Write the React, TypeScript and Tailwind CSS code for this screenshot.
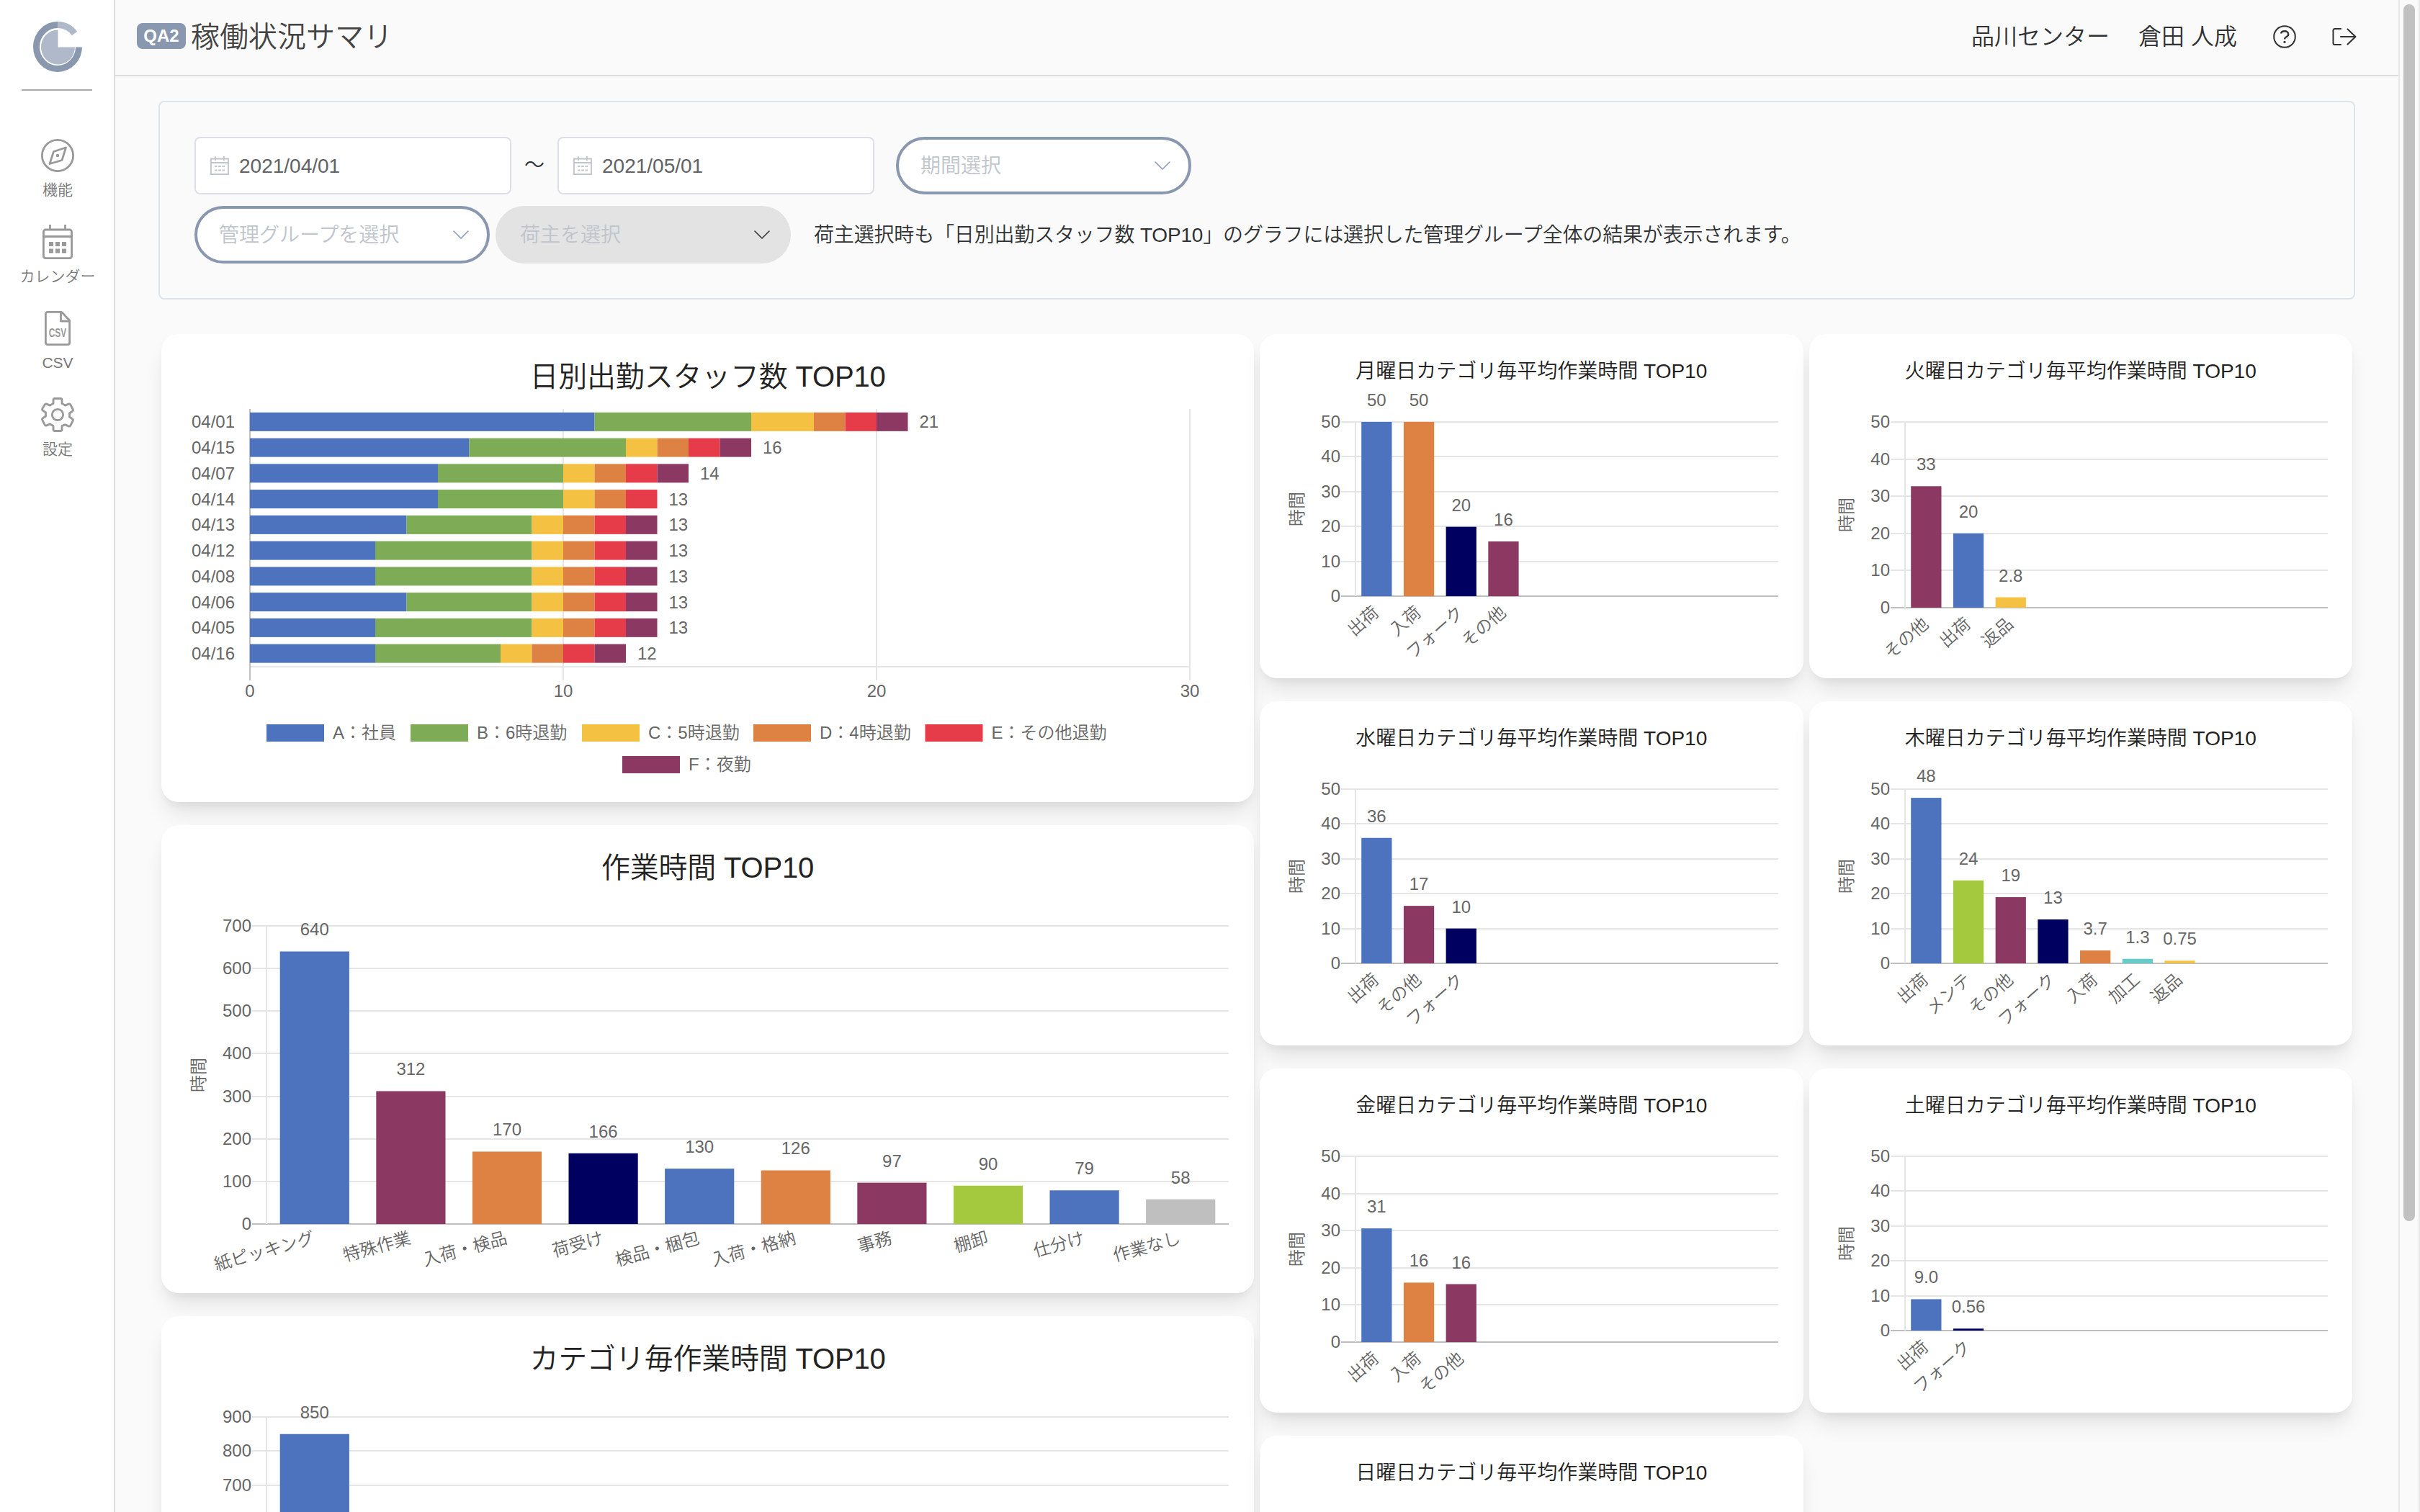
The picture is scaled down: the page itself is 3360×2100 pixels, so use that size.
import React from 'react';
import clsx from 'clsx';

const BLUE = '#4d72be';
const GREEN = '#7eab55';
const YELLOW = '#f4c142';
const ORANGE = '#dd8243';
const RED = '#e63b49';
const PURPLE = '#8b3962';
const NAVY = '#000060';
const LIME = '#a4c93f';
const TEAL = '#67cbc9';
const GRAY = '#bfbfbf';

type Bar = { name: string; value: number; label: string; color: string };

const staff = [
  { day: '04/01', values: [11, 5, 2, 1, 1, 1] },
  { day: '04/15', values: [7, 5, 1, 1, 1, 1] },
  { day: '04/07', values: [6, 4, 1, 1, 1, 1] },
  { day: '04/14', values: [6, 4, 1, 1, 1, 0] },
  { day: '04/13', values: [5, 4, 1, 1, 1, 1] },
  { day: '04/12', values: [4, 5, 1, 1, 1, 1] },
  { day: '04/08', values: [4, 5, 1, 1, 1, 1] },
  { day: '04/06', values: [5, 4, 1, 1, 1, 1] },
  { day: '04/05', values: [4, 5, 1, 1, 1, 1] },
  { day: '04/16', values: [4, 4, 1, 1, 1, 1] },
];

const legend = [
  { name: 'A：社員', color: BLUE, x: 146, y: 542 },
  { name: 'B：6時退勤', color: GREEN, x: 346, y: 542 },
  { name: 'C：5時退勤', color: YELLOW, x: 584, y: 542 },
  { name: 'D：4時退勤', color: ORANGE, x: 822, y: 542 },
  { name: 'E：その他退勤', color: RED, x: 1060.5, y: 542 },
  { name: 'F：夜勤', color: PURPLE, x: 640, y: 586 },
];

const work: Bar[] = [
  { name: '紙ピッキング', value: 640, label: '640', color: BLUE },
  { name: '特殊作業', value: 312, label: '312', color: PURPLE },
  { name: '入荷・検品', value: 170, label: '170', color: ORANGE },
  { name: '荷受け', value: 166, label: '166', color: NAVY },
  { name: '検品・梱包', value: 130, label: '130', color: BLUE },
  { name: '入荷・格納', value: 126, label: '126', color: ORANGE },
  { name: '事務', value: 97, label: '97', color: PURPLE },
  { name: '棚卸', value: 90, label: '90', color: LIME },
  { name: '仕分け', value: 79, label: '79', color: BLUE },
  { name: '作業なし', value: 58, label: '58', color: GRAY },
];

const category: Bar[] = [{ name: '出荷', value: 850, label: '850', color: BLUE }];

const weekdays: { day: string; zero: number; bars: Bar[] }[] = [
  {
    day: '月', zero: 364, bars: [
      { name: '出荷', value: 50, label: '50', color: BLUE },
      { name: '入荷', value: 50, label: '50', color: ORANGE },
      { name: 'フォーク', value: 19.9, label: '20', color: NAVY },
      { name: 'その他', value: 15.7, label: '16', color: PURPLE },
    ],
  },
  {
    day: '火', zero: 380, bars: [
      { name: 'その他', value: 32.7, label: '33', color: PURPLE },
      { name: '出荷', value: 20, label: '20', color: BLUE },
      { name: '返品', value: 2.8, label: '2.8', color: YELLOW },
    ],
  },
  {
    day: '水', zero: 364, bars: [
      { name: '出荷', value: 36, label: '36', color: BLUE },
      { name: 'その他', value: 16.5, label: '17', color: PURPLE },
      { name: 'フォーク', value: 10, label: '10', color: NAVY },
    ],
  },
  {
    day: '木', zero: 364, bars: [
      { name: '出荷', value: 47.5, label: '48', color: BLUE },
      { name: 'メンテ', value: 23.8, label: '24', color: LIME },
      { name: 'その他', value: 19, label: '19', color: PURPLE },
      { name: 'フォーク', value: 12.6, label: '13', color: NAVY },
      { name: '入荷', value: 3.7, label: '3.7', color: ORANGE },
      { name: '加工', value: 1.3, label: '1.3', color: TEAL },
      { name: '返品', value: 0.75, label: '0.75', color: YELLOW },
    ],
  },
  {
    day: '金', zero: 380, bars: [
      { name: '出荷', value: 30.6, label: '31', color: BLUE },
      { name: '入荷', value: 16, label: '16', color: ORANGE },
      { name: 'その他', value: 15.6, label: '16', color: PURPLE },
    ],
  },
  {
    day: '土', zero: 364, bars: [
      { name: '出荷', value: 9, label: '9.0', color: BLUE },
      { name: 'フォーク', value: 0.56, label: '0.56', color: NAVY },
    ],
  },
];

function Card({ title, small, children }: { title: string; small?: boolean; children?: React.ReactNode }) {
  return (
    <section
      className={clsx(
        'relative bg-white rounded-[24px] shadow-[0_20px_30px_-6px_rgba(0,0,0,0.1),0_8px_12px_-4px_rgba(0,0,0,0.05)]',
        small ? 'h-[478px] pt-[31px]' : 'h-[650px] pt-[29px]'
      )}
    >
      <h2 className={clsx('text-center text-[#222]', small ? 'text-[28px] leading-[42px]' : 'text-[40px] leading-[61px] tracking-[-0.2px]')}>{title}</h2>
      <svg className="absolute inset-0 w-full h-full" fontSize="24" fill="#666">
        {children}
      </svg>
    </section>
  );
}

function StaffChart() {
  const x0 = 123;
  const unit = 43.5;
  const colors = [BLUE, GREEN, YELLOW, ORANGE, RED, PURPLE];
  return (
    <g>
      {[10, 20, 30].map((v) => (
        <g key={v}>
          <rect x={x0 + v * unit - 1} y="104" width="2" height="377" fill="#e5e5e5" />
          <text x={x0 + v * unit} y="504" textAnchor="middle">{v}</text>
        </g>
      ))}
      <rect x={x0} y="461" width={unit * 30} height="2" fill="#e5e5e5" />
      <rect x={x0 - 1} y="104" width="2" height="377" fill="#bfbfbf" />
      <text x={x0} y="504" textAnchor="middle">0</text>
      {staff.map((row, i) => {
        const mid = 104 + 35.75 * (i + 0.5);
        let sum = 0;
        return (
          <g key={row.day}>
            <text x="102" y={mid + 8.5} textAnchor="end">{row.day}</text>
            {row.values.map((v, j) => {
              const x = x0 + sum * unit;
              sum += v;
              return <rect key={j} x={x} y={mid - 13} width={v * unit} height="26" fill={colors[j]} />;
            })}
            <text x={x0 + sum * unit + 16} y={mid + 8.5}>{sum}</text>
          </g>
        );
      })}
      {legend.map((l) => (
        <g key={l.name}>
          <rect x={l.x} y={l.y} width="80" height="24" fill={l.color} />
          <text x={l.x + 92} y={l.y + 20}>{l.name}</text>
        </g>
      ))}
    </g>
  );
}

type BarChartProps = {
  bars: Bar[];
  max: number;
  min?: number;
  step: number;
  left: number;
  right: number;
  top: number;
  zero: number;
  angle: number;
};

// min > 0 の場合は min 未満の目盛と下側の軸ラベルを描画しない
function BarChart({ bars, max, min = 0, step, left, right, top, zero, angle }: BarChartProps) {
  const ticks = Array.from({ length: (max - min) / step + 1 }, (_, i) => min + i * step);
  const scale = (zero - top) / max;
  const cat = (right - left) / 10;
  const mid = (top + zero) / 2;
  return (
    <g>
      {ticks.map((t) => (
        <g key={t}>
          <rect x={left - 20} y={Math.round(zero - t * scale) - 1} width={right - left + 20} height="2" fill={t === 0 ? '#bfbfbf' : '#e5e5e5'} />
          <text x={left - 21} y={zero - t * scale + 8} textAnchor="end">{t}</text>
        </g>
      ))}
      <rect x={left - 1} y={top} width="2" height={zero - top} fill="#e5e5e5" />
      {min === 0 && <text transform={`translate(60 ${mid}) rotate(-90)`} textAnchor="middle">時間</text>}
      {bars.map((b, i) => {
        const cx = left + cat * (i + 0.5);
        const y = zero - b.value * scale;
        return (
          <g key={i}>
            <rect x={cx - cat * 0.36} y={y} width={cat * 0.72} height={zero - y} fill={b.color} />
            <text x={cx} y={y - 22} textAnchor="middle">{b.label}</text>
            {min === 0 && <text transform={`translate(${cx - 1} ${zero + 18}) rotate(${-angle})`} y="9" textAnchor="end">{b.name}</text>}
          </g>
        );
      })}
    </g>
  );
}

function Chevron({ className }: { className?: string }) {
  return (
    <svg className={clsx('w-[22px] h-3', className)} viewBox="0 0 22 12" fill="none" stroke="currentColor" strokeWidth="1.5" strokeLinecap="round" strokeLinejoin="round">
      <path d="M1 1l10 10L21 1" />
    </svg>
  );
}

function Select({ text, disabled }: { text: string; disabled?: boolean }) {
  return (
    <div
      className={clsx(
        'flex items-center justify-between w-[410px] h-20 rounded-full text-[#c0c4cc]',
        disabled ? 'bg-[#e3e3e3] pl-[34px] pr-[29px]' : 'bg-white border-4 border-[#8997af] pl-[30px] pr-[25px]'
      )}
    >
      <span className="pt-0.5">{text}</span>
      <Chevron className={disabled ? 'text-[#303133]' : 'text-[#8997af]'} />
    </div>
  );
}

function DateInput({ value }: { value: string }) {
  return (
    <div className="flex items-center w-[440px] h-20 bg-white border-2 border-[#dcdfe6] rounded-lg pl-5 text-[#606266]">
      <svg className="w-[26px] h-[26px] mr-[14px]" viewBox="0 0 26 26" fill="none" stroke="#c0c4cc" strokeWidth="1.8">
        <path d="M1 3.500h24v21.500H1zM1 9h24M7 0v6M19 0v6" />
        <path d="M6 14h3.500M11.300 14h3.500M16.600 14h3.500M6 19.500h3.500M11.300 19.500h3.500M16.600 19.500h3.500" />
      </svg>
      <span className="pt-0.5">{value}</span>
    </div>
  );
}

function CompassIcon() {
  return (
    <svg className="w-[46px] h-[46px]" viewBox="0 0 46 46" fill="none" stroke="#999" strokeWidth="2.800" strokeLinejoin="round">
      <circle cx="23" cy="23" r="21.600" />
      <path d="M17.500 17.500l17-5.500-5.500 17.500-17 5 5.500-17z" />
      <circle cx="23" cy="23" r="2.200" fill="#999" stroke="none" />
    </svg>
  );
}

function CalendarIcon() {
  return (
    <svg className="w-[42px] h-12" viewBox="0 0 42 48" fill="none" stroke="#999" strokeWidth="2.800">
      <rect x="1.400" y="7" width="39.200" height="39.600" rx="3" />
      <path d="M1.400 16.500h39.200M10.500 0v7M31.500 0v7" />
      <path d="M9 27h6M18 27h6M27 27h6M9 36.500h6M18 36.500h6M27 36.500h6" strokeWidth="6" />
    </svg>
  );
}

function CsvIcon() {
  return (
    <svg className="w-9 h-12 overflow-visible" viewBox="0 0 36 48" fill="none" stroke="#999" strokeWidth="2.800" strokeLinejoin="round">
      <path d="M4 1.400h19.500L34.600 13v31a2.600 2.600 0 0 1-2.600 2.600H4A2.600 2.600 0 0 1 1.400 44V4A2.600 2.600 0 0 1 4 1.400z" />
      <path d="M22.500 1.400V14h12" />
      <text transform="translate(18 36) scale(0.72 1)" textAnchor="middle" fontSize="16.500" fontWeight="700" fill="#999" stroke="none">CSV</text>
    </svg>
  );
}

function GearIcon() {
  return (
    <svg className="w-[46px] h-[48px]" viewBox="0 0 46 48" fill="none" stroke="#999" strokeWidth="2.800" strokeLinejoin="round">
      <path d="M17 3.500Q17 1.500 19 1.500h8q2 0 2 2V8.500q2.500 1 4.500 2.600l4.600-2q1.800-.7 2.700.9l3.400 6.500q.8 1.700-.8 2.800l-4 2.700q.3 2.500 0 5l4 2.700q1.600 1.100.8 2.800l-3.400 6.500q-.9 1.600-2.700.9l-4.600-2Q31.500 38.500 29 39.500v5q0 2-2 2h-8q-2 0-2-2v-5q-2.500-1-4.500-2.600l-4.600 2q-1.800.7-2.700-.9L1.800 31.500q-.8-1.700.8-2.800l4-2.700q-.3-2.500 0-5l-4-2.700Q1 17.200 1.800 15.500L5.200 10q.9-1.600 2.700-.9l4.600 2Q14.500 9.500 17 8.500z" />
      <circle cx="23" cy="24" r="7.700" />
    </svg>
  );
}

const menu = [
  { name: '機能', icon: <CompassIcon /> },
  { name: 'カレンダー', icon: <CalendarIcon /> },
  { name: 'CSV', icon: <CsvIcon /> },
  { name: '設定', icon: <GearIcon /> },
];

export default function App() {
  return (
    <div className="flex w-[3360px] h-[2100px] overflow-hidden bg-[#fafafa] text-[28px] text-[#303133] font-['Liberation_Sans','Noto_Sans_CJK_JP',sans-serif] font-[350]">
      {/* サイドバー */}
      <aside className="flex flex-col items-center shrink-0 w-40 bg-white border-r-2 border-[#dcdcdc] pl-0.5 pt-[30px]">
        <svg className="w-[68px] h-[70px]" viewBox="0 0 68 70" fill="none">
          <path d="M34.500 4.500A29.500 30.500 0 1 0 63.500 35.500" stroke="#8997af" strokeWidth="9" />
          <path d="M34.500 4.500a29.500 30.500 0 0 1 23 12" stroke="#afb9ca" strokeWidth="9" />
          <path d="M34.500 11.500v24h23.500a23.500 24 0 1 1-23.500-24z" fill="#afb9ca" />
        </svg>
        <div className="w-[98px] h-0.5 mt-6 mr-0.5 bg-[#aaa]" />
        <nav className="flex flex-col items-center mt-[59px]">
          {menu.map((m) => (
            <div key={m.name} className="flex flex-col items-center h-[120px] pt-[5px] text-[#777]">
              <div className="flex items-center h-[52px]">{m.icon}</div>
              <span className="mt-1.5 text-[21px] leading-8 whitespace-nowrap">{m.name}</span>
            </div>
          ))}
        </nav>
      </aside>

      <div className="flex flex-col w-[3170px]">
        {/* ヘッダー */}
        <header className="flex items-center shrink-0 h-[106px] border-b-2 border-[#dcdcdc] pl-[30px] pr-[58px] pb-1">
          <span className="flex items-center justify-center w-[68px] h-9 rounded-lg bg-[#8997af] text-white text-2xl font-bold">QA2</span>
          <h1 className="ml-[7px] pt-0.5 text-[40px] text-[#444]">稼働状況サマリ</h1>
          <div className="flex items-center ml-auto text-[32px]">
            <span className="pt-0.5">品川センター</span>
            <span className="ml-10 pt-0.5">倉田 人成</span>
            <svg className="w-8 h-8 ml-[50px] mt-0.5" viewBox="0 0 32 32" fill="none" stroke="#303133" strokeWidth="2">
              <circle cx="16" cy="16" r="14.800" />
              <path d="M11 11.500c.5-2 2.300-3.200 5-3.200 3 0 5.200 1.700 5.200 4.200 0 2-1.200 2.900-2.800 3.800-1.800 1-2.400 1.600-2.400 3.300" strokeWidth="2.400" />
              <circle cx="16" cy="23.300" r="1.600" fill="#303133" stroke="none" />
            </svg>
            <svg className="w-[34px] h-6 ml-[50px] mt-0.5" viewBox="0 0 34 24" fill="none" stroke="#303133" strokeWidth="2" strokeLinecap="round" strokeLinejoin="round">
              <path d="M12 1H3.500A2 2 0 0 0 1.500 3v18a2 2 0 0 0 2 2H12" />
              <path d="M12 12h20.500M21.500 1.500L32.500 12l-11 10.500" />
            </svg>
          </div>
        </header>

        <main className="pl-[60px] pt-[34px]">
          {/* 検索条件 */}
          <div className="flex flex-col gap-4 w-[3050px] h-[276px] pt-12 pl-12 border-2 border-[#dfe4e8] rounded-lg">
            <div className="flex items-center">
              <DateInput value="2021/04/01" />
              <span className="w-16 text-center">～</span>
              <DateInput value="2021/05/01" />
              <div className="ml-[30px]">
                <Select text="期間選択" />
              </div>
            </div>
            <div className="flex items-center">
              <Select text="管理グループを選択" />
              <div className="ml-2">
                <Select text="荷主を選択" disabled />
              </div>
              <p className="ml-8 pt-0.5 tracking-[-0.17px]">荷主選択時も「日別出勤スタッフ数 TOP10」のグラフには選択した管理グループ全体の結果が表示されます。</p>
            </div>
          </div>

          {/* グラフ */}
          <div className="flex gap-2 w-[3050px] px-1 pt-12">
            <div className="flex flex-col gap-8 w-[1517px] shrink-0">
              <Card title="日別出勤スタッフ数 TOP10">
                <StaffChart />
              </Card>
              <Card title="作業時間 TOP10">
                <BarChart bars={work} max={700} step={100} left={146} right={1482} top={140} zero={554} angle={15.5} />
              </Card>
              <Card title="カテゴリ毎作業時間 TOP10">
                <BarChart bars={category} max={900} min={700} step={100} left={146} right={1482} top={140} zero={567} angle={0} />
              </Card>
            </div>
            <div className="grid grid-cols-2 gap-x-2 gap-y-8 grow content-start">
              {weekdays.map((w) => (
                <Card key={w.day} small title={`${w.day}曜日カテゴリ毎平均作業時間 TOP10`}>
                  <BarChart bars={w.bars} max={50} step={10} left={133} right={720} top={122} zero={w.zero} angle={41.5} />
                </Card>
              ))}
              <Card small title="日曜日カテゴリ毎平均作業時間 TOP10" />
            </div>
          </div>
        </main>
      </div>

      {/* スクロールバー */}
      <div className="flex justify-center w-[30px] shrink-0 border-l-2 border-r-2 border-[#e8e8e8] pt-1.5">
        <div className="w-4 h-[1690px] rounded-full bg-[#c1c1c1]" />
      </div>
    </div>
  );
}
